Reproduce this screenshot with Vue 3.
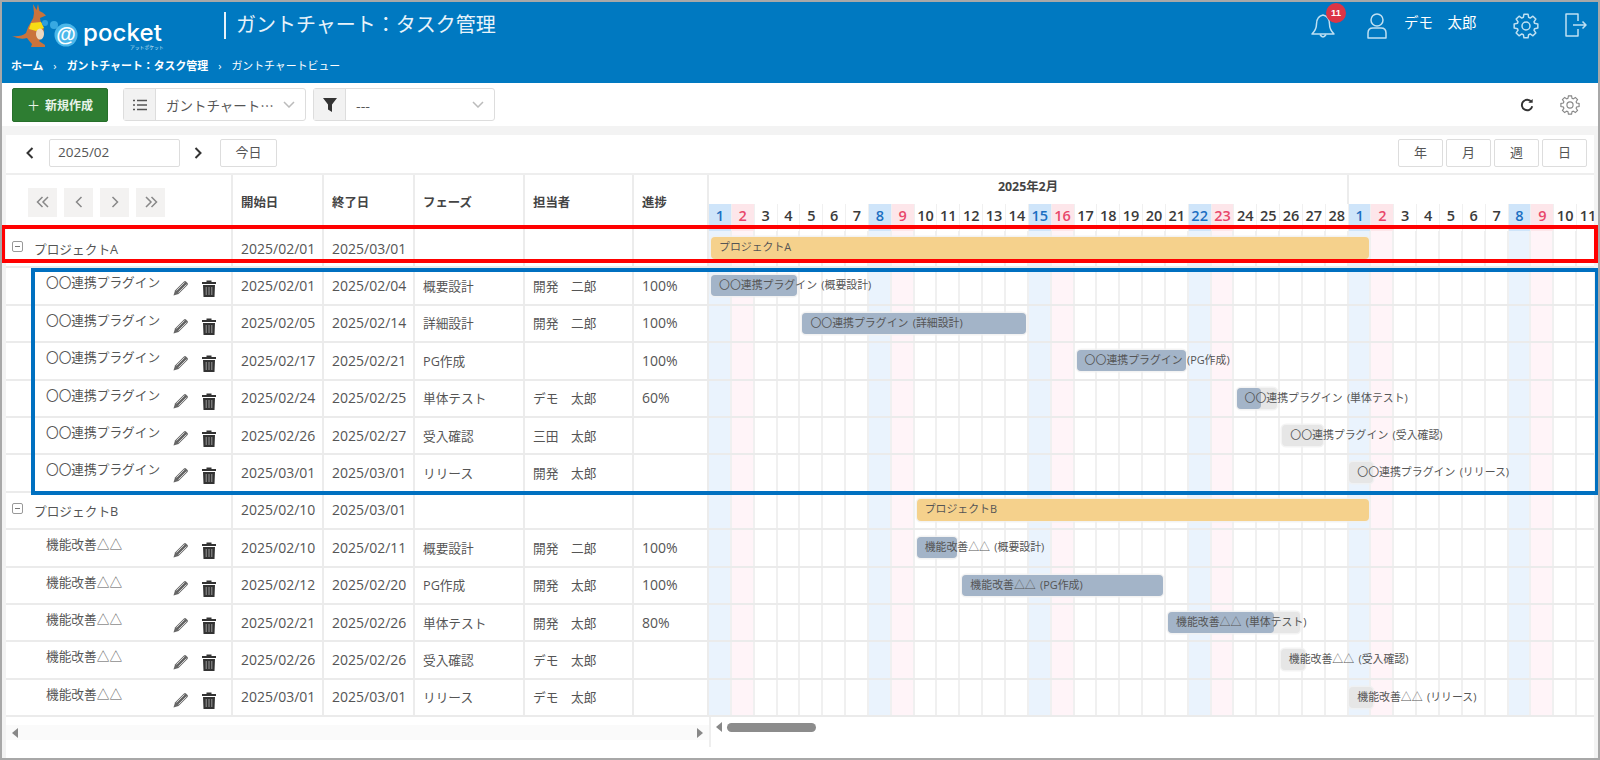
<script setup>
// 日ごとの幅と基準日
const DAY_W = 22.85

const days = []
for (let i = 1; i <= 28; i++) days.push({ n: i, kind: i % 7 === 1 ? 'sat' : i % 7 === 2 ? 'sun' : '' })
for (let i = 1; i <= 11; i++) days.push({ n: i, kind: i % 7 === 1 ? 'sat' : i % 7 === 2 ? 'sun' : '' })

const toIdx = (s) => {
  const [, m, d] = s.split('/').map(Number)
  return m === 2 ? d - 1 : 27 + d
}

const makeTasks = (name, list) =>
  list.map(([start, end, phase, person, progress]) => ({ name, start, end, phase, person, progress }))

const rows = [
  { project: true, name: 'プロジェクトA', start: '2025/02/01', end: '2025/03/01' },
  ...makeTasks('〇〇連携プラグイン', [
    ['2025/02/01', '2025/02/04', '概要設計', '開発　二郎', 100],
    ['2025/02/05', '2025/02/14', '詳細設計', '開発　二郎', 100],
    ['2025/02/17', '2025/02/21', 'PG作成', '', 100],
    ['2025/02/24', '2025/02/25', '単体テスト', 'デモ　太郎', 60],
    ['2025/02/26', '2025/02/27', '受入確認', '三田　太郎', null],
    ['2025/03/01', '2025/03/01', 'リリース', '開発　太郎', null]
  ]),
  { project: true, name: 'プロジェクトB', start: '2025/02/10', end: '2025/03/01' },
  ...makeTasks('機能改善△△', [
    ['2025/02/10', '2025/02/11', '概要設計', '開発　二郎', 100],
    ['2025/02/12', '2025/02/20', 'PG作成', '開発　太郎', 100],
    ['2025/02/21', '2025/02/26', '単体テスト', '開発　太郎', 80],
    ['2025/02/26', '2025/02/26', '受入確認', 'デモ　太郎', null],
    ['2025/03/01', '2025/03/01', 'リリース', 'デモ　太郎', null]
  ])
]

const barStyle = (r) => {
  const a = toIdx(r.start)
  const n = toIdx(r.end) - a + 1
  if (n === 1) return { left: a * DAY_W + 0.5 + 'px', width: '24px' }
  return { left: a * DAY_W + 2 + 'px', width: n * DAY_W - 5 + 'px' }
}

const barLabel = (r) => (r.project ? r.name : `${r.name} (${r.phase})`)

// 歯車のアウトライン
const gearPath = (() => {
  const pts = []
  for (let i = 0; i < 8; i++) {
    const a = (i * Math.PI) / 4
    const steps = [[-0.3, 9], [-0.17, 12], [0.17, 12], [0.3, 9]]
    for (const [off, r] of steps) {
      pts.push(`${(13 + r * Math.cos(a + off)).toFixed(2)} ${(13 + r * Math.sin(a + off)).toFixed(2)}`)
    }
  }
  return 'M' + pts.join(' L') + ' Z'
})()
</script>

<template>
  <div class="page">
    <header class="app-header">
      <div class="top-row">
        <svg class="logo" viewBox="10 2 165 50" width="165" height="50">
          <path d="M33 4 L36.5 10 L38 4 L39.5 11 Q43 12 46 15.5 L40 18 Q40 21 42 24 Q45 30 43 35 Q41 39 39 41 L45 45 L45 47 L31 47 L32 44 Q29 41 27 38 Q20 40 12 36 Q21 37 26 33 Q28 26 31 22 Q34 18 34 13 Z" fill="#c9733c" />
          <path d="M31 23 L41 22 L44 28 L36 31 L29 29 Z" fill="#f7dc14" />
          <ellipse cx="40" cy="34" rx="4" ry="5.5" fill="#ecd8c0" />
          <circle cx="45" cy="23" r="3" fill="#2f9fdc" />
          <circle cx="54" cy="25" r="4" fill="#38a9e2" />
          <circle cx="66" cy="35" r="11.5" fill="#4cb8ea" />
          <text x="66" y="41" text-anchor="middle" class="logo-at">@</text>
          <text x="83" y="41" textLength="79" class="logo-word">pocket</text>
          <text x="130" y="48.5" class="logo-kana">アットポケット</text>
        </svg>
        <h1 class="title">ガントチャート：タスク管理</h1>
        <div class="user-area">
          <div class="bell">
            <svg class="ico" viewBox="0 0 26 26" width="26" height="26">
              <path d="M13 2 C8 3 6.5 7 6.5 11 C6.5 15 5 18 2 21 L24 21 C21 18 19.5 15 19.5 11 C19.5 7 18 3 13 2 Z" />
              <path d="M10 21.5 Q13 26.5 16 21.5" />
            </svg>
            <span class="badge">11</span>
          </div>
          <svg class="ico user" viewBox="0 0 20 26" width="20" height="26">
            <circle cx="10" cy="7" r="6" />
            <path d="M1 25 L1 20 Q1 15 6 15 L14 15 Q19 15 19 20 L19 25 Z" />
          </svg>
          <span class="user-name">デモ　太郎</span>
          <svg class="ico gear" viewBox="0 0 26 26" width="26" height="26">
            <path :d="gearPath" />
            <circle cx="13" cy="13" r="4" />
          </svg>
          <svg class="ico exit" viewBox="0 0 22 24" width="22" height="24">
            <path d="M13 8 L13 1 L1 1 L1 23 L13 23 L13 16" />
            <path d="M8 12 L21 12 M17.5 8.5 L21 12 L17.5 15.5" />
          </svg>
        </div>
      </div>
      <nav class="crumbs">
        <span>ホーム</span><i>›</i><span>ガントチャート：タスク管理</span><i>›</i><span class="cur">ガントチャートビュー</span>
      </nav>
    </header>

    <div class="toolbar">
      <button class="btn-new"><span class="plus">＋</span>新規作成</button>
      <div class="select view-select">
        <span class="select-icon">
          <svg viewBox="0 0 14 12" width="14" height="12"><path d="M0 1.5H2M4 1.5H14M0 6H2M4 6H14M0 10.5H2M4 10.5H14" stroke="#555" stroke-width="1.3" /></svg>
        </span>
        <span class="select-text">ガントチャート…</span>
        <svg class="caret" viewBox="0 0 12 7" width="12" height="7"><path d="M1 1 L6 6 L11 1" /></svg>
      </div>
      <div class="select filter-select">
        <span class="select-icon">
          <svg viewBox="0 0 14 14" width="14" height="14"><path d="M0 0 H14 L9 6.5 V14 L5 11.5 V6.5 Z" fill="#333" /></svg>
        </span>
        <span class="select-text">---</span>
        <svg class="caret" viewBox="0 0 12 7" width="12" height="7"><path d="M1 1 L6 6 L11 1" /></svg>
      </div>
      <svg class="refresh" viewBox="0 0 16 16" width="14" height="14">
        <path d="M13 4.5 A6 6 0 1 0 14 9.5" fill="none" stroke="#333" stroke-width="2.2" />
        <path d="M9.5 5.5 L14.5 5.5 L14.5 1 Z" fill="#333" />
      </svg>
      <svg class="setting" viewBox="0 0 26 26" width="20" height="20">
        <path :d="gearPath" />
        <circle cx="13" cy="13" r="4" />
      </svg>
    </div>

    <main class="main">
      <section class="panel">
        <div class="date-bar">
          <svg class="arrow first" viewBox="0 0 8 12" width="8" height="12"><path d="M6.5 1 L1.5 6 L6.5 11" /></svg>
          <div class="date-input">2025/02</div>
          <svg class="arrow" viewBox="0 0 8 12" width="8" height="12"><path d="M1.5 1 L6.5 6 L1.5 11" /></svg>
          <button class="plain today">今日</button>
          <div class="scale-btns">
            <button class="plain">年</button>
            <button class="plain">月</button>
            <button class="plain">週</button>
            <button class="plain">日</button>
          </div>
        </div>

        <div class="grid-row head-row">
          <div class="cell nav-cell">
            <button class="nav-btn"><svg viewBox="0 0 16 12" width="16" height="12"><path d="M7.5 1 L2.5 6 L7.5 11 M13 1 L8 6 L13 11" /></svg></button>
            <button class="nav-btn"><svg viewBox="0 0 16 12" width="16" height="12"><path d="M10.5 1 L5.5 6 L10.5 11" /></svg></button>
            <button class="nav-btn"><svg viewBox="0 0 16 12" width="16" height="12"><path d="M5.5 1 L10.5 6 L5.5 11" /></svg></button>
            <button class="nav-btn"><svg viewBox="0 0 16 12" width="16" height="12"><path d="M3 1 L8 6 L3 11 M8.5 1 L13.5 6 L8.5 11" /></svg></button>
          </div>
          <div class="cell th">開始日</div>
          <div class="cell th">終了日</div>
          <div class="cell th">フェーズ</div>
          <div class="cell th">担当者</div>
          <div class="cell th">進捗</div>
          <div class="gantt-head">
            <div class="months">
              <div class="month feb">2025年2月</div>
              <div class="month"></div>
            </div>
            <div class="day-row">
              <div v-for="(d, i) in days" :key="i" class="day" :class="d.kind">{{ d.n }}</div>
            </div>
          </div>
        </div>

        <div v-for="(r, i) in rows" :key="i" class="grid-row body-row">
          <div class="cell name-cell" :class="{ 'is-project': r.project }">
            <template v-if="r.project">
              <span class="toggle"></span>
              <span class="project-name">{{ r.name }}</span>
            </template>
            <template v-else>
              <span class="task-name">{{ r.name }}</span>
              <svg class="pencil" viewBox="0 0 18 18" width="18" height="18">
                <path d="M1.5 16.5 L3 11.5 L12 2.5 Q13 1.5 14 2.5 L15.5 4 Q16.5 5 15.5 6 L6.5 15 Z" fill="#666" />
                <path d="M4.5 11.5 L12.5 3.5 M6.5 13.5 L14.5 5.5" stroke="#fff" stroke-width=".7" />
              </svg>
              <svg class="trash" viewBox="0 0 14 17" width="14" height="17">
                <path d="M4.5 2 V.5 H9.5 V2 H14 V4 H0 V2 Z M1 5 H13 L12.5 17 H1.5 Z" fill="#333" />
                <path d="M4.2 7 V15 M7 7 V15 M9.8 7 V15" stroke="#999" stroke-width="1" />
              </svg>
            </template>
          </div>
          <div class="cell num">{{ r.start }}</div>
          <div class="cell num">{{ r.end }}</div>
          <div class="cell">{{ r.phase }}</div>
          <div class="cell">{{ r.person }}</div>
          <div class="cell num">{{ r.progress ? r.progress + '%' : '' }}</div>
          <div class="gantt-cell">
            <div v-for="(d, j) in days" :key="j" class="bg-day" :class="d.kind"></div>
            <div class="bar" :class="r.project ? 'bar-project' : 'bar-task'" :style="barStyle(r)">
              <div v-if="r.progress" class="bar-progress" :style="{ width: r.progress + '%' }"></div>
              <span class="bar-label">{{ barLabel(r) }}</span>
            </div>
          </div>
        </div>

        <div class="scroll-row">
          <div class="scroll-left">
            <span class="tri tri-l"></span>
            <span class="tri tri-r"></span>
          </div>
          <div class="scroll-right">
            <span class="tri tri-l"></span>
            <span class="thumb"></span>
          </div>
        </div>
      </section>
    </main>

    <!-- 説明用の枠線 -->
    <div class="mark mark-red"></div>
    <div class="mark mark-blue"></div>
  </div>
</template>

<style>
html, body { margin: 0; background: #fff; }
</style>

<style scoped>
.page {
  position: relative;
  width: 1600px;
  height: 760px;
  box-sizing: border-box;
  border: 2px solid #a8a8a8;
  overflow: hidden;
  display: flex;
  flex-direction: column;
  font-family: "Open Sans", "Noto Sans CJK JP", sans-serif;
  font-size: 12.7px;
  color: #555;
  background: #fff;
}

/* ヘッダー */
.app-header {
  height: 81px;
  flex: none;
  background: #0079c1;
  color: #fff;
}
.top-row {
  height: 53px;
  display: flex;
  align-items: flex-start;
  padding-left: 8px;
}
.logo { flex: none; }
.logo-at { font: 700 20px "Liberation Sans", sans-serif; fill: #fff; }
.logo-word { font: 500 24px Inter, sans-serif; fill: #fff; }
.logo-kana { font: 400 4.8px "Noto Sans CJK JP", sans-serif; fill: #cfe6f5; }
.title {
  margin: 10px 0 0 49px;
  padding-left: 10px;
  border-left: 2px solid #e6f2fa;
  height: 27px;
  line-height: 25px;
  font-size: 20px;
  font-weight: 400;
  color: #e8f3fa;
  white-space: nowrap;
}
.user-area {
  margin-left: auto;
  padding: 11px 11px 0 0;
  display: flex;
  align-items: flex-start;
}
.ico { fill: none; stroke: #bfe0f2; stroke-width: 1.5; flex: none; stroke-linejoin: round; }
.bell { position: relative; width: 26px; height: 26px; }
.badge {
  position: absolute;
  top: -10px;
  left: 16px;
  width: 20px;
  height: 20px;
  border-radius: 50%;
  background: #dc3545;
  color: #fff;
  font-size: 9.5px;
  font-weight: 700;
  line-height: 20px;
  text-align: center;
  font-family: "Liberation Sans", sans-serif;
}
.user { margin-left: 31px; }
.user-name { margin-left: 17px; width: 78px; font-size: 14.5px; line-height: 20px; color: #fff; white-space: nowrap; }
.gear { margin-left: 31px; }
.exit { margin-left: 26px; }
.crumbs {
  display: flex;
  align-items: center;
  padding-left: 9px;
  margin-top: 1px;
  font-size: 10.9px;
  font-weight: 700;
  line-height: 20px;
  white-space: nowrap;
}
.crumbs i { font-style: normal; margin: 0 10px; font-weight: 400; }
.crumbs .cur { font-weight: 400; }

/* ツールバー */
.toolbar {
  height: 43px;
  flex: none;
  display: flex;
  align-items: center;
  padding: 0 18px 0 10px;
  box-sizing: border-box;
}
.btn-new {
  width: 96px;
  height: 34px;
  background: #2e7d32;
  border: 1px solid #27702b;
  border-radius: 2px;
  color: #e8f3e8;
  font: 700 12px "Noto Sans CJK JP", sans-serif;
  padding: 0;
}
.plus { margin-right: 5px; font-weight: 400; font-size: 13px; }
.select {
  height: 33px;
  box-sizing: border-box;
  border: 1px solid #ddd;
  border-radius: 3px;
  display: flex;
  align-items: center;
  background: #fff;
}
.view-select { width: 183px; margin-left: 15px; }
.filter-select { width: 182px; margin-left: 7px; }
.select-icon {
  width: 31px;
  height: 100%;
  flex: none;
  background: #f2f2f2;
  border-right: 1px solid #ddd;
  display: flex;
  align-items: center;
  justify-content: center;
}
.select-text { margin-left: 10px; font-family: "Noto Sans CJK JP", sans-serif; font-size: 13.5px; color: #555; white-space: nowrap; }
.caret { margin: 0 10px 0 auto; fill: none; stroke: #bbb; stroke-width: 1.5; }
.refresh { margin-left: auto; }
.setting { margin-left: 26px; fill: none; stroke: #888; stroke-width: 1.5; }

/* パネル */
.main {
  flex: 1;
  background: #f3f3f3;
  padding: 9px 4px 0 4px;
  min-height: 0;
}
.panel {
  height: 100%;
  background: #fff;
  overflow: hidden;
}
.date-bar {
  height: 40px;
  box-sizing: border-box;
  border-bottom: 2px solid #eee;
  display: flex;
  align-items: center;
  padding-bottom: 2px;
}
.arrow { fill: none; stroke: #333; stroke-width: 2; margin: 0 14px; }
.arrow.first { margin: 0 15px 0 20px; }
.date-input {
  width: 131px;
  height: 28px;
  box-sizing: border-box;
  border: 1px solid #ddd;
  border-radius: 2px;
  padding-left: 8px;
  line-height: 24px;
  font-size: 13.5px;
}
.plain {
  height: 28px;
  width: 45px;
  box-sizing: border-box;
  border: 1px solid #ddd;
  border-radius: 2px;
  background: #fff;
  color: #555;
  font: 400 13px "Noto Sans CJK JP", sans-serif;
  padding: 0 0 3px;
}
.today { width: 57px; margin-left: 4px; }
.scale-btns { margin: 0 7px 0 auto; display: flex; gap: 3px; }

/* グリッド */
.grid-row {
  display: grid;
  grid-template-columns: 227px 91px 91px 110px 109px 75px 885px;
}
.head-row { height: 56px; }
.body-row {
  height: 37.4px;
  box-sizing: border-box;
  border-bottom: 2px solid #ebebeb;
}
.cell {
  box-sizing: border-box;
  border-right: 2px solid #ececec;
  padding-left: 8px;
  display: flex;
  align-items: center;
  white-space: nowrap;
  min-width: 0;
}
.body-row .cell { padding-bottom: 1px; }
.th { font-weight: 700; color: #444; font-size: 12.4px; padding-bottom: 2px; }
.num { font-size: 14px; }
.nav-cell { padding-left: 22px; gap: 7px; padding-bottom: 2px; }
.nav-btn {
  width: 29px;
  height: 29px;
  border: 0;
  background: #f3f2f1;
  padding: 0;
  display: flex;
  align-items: center;
  justify-content: center;
}
.nav-btn svg { fill: none; stroke: #888; stroke-width: 1.5; }
.gantt-head { overflow: hidden; display: flex; flex-direction: column; }
.months { display: flex; height: 29px; flex: none; }
.month {
  width: 640px;
  flex: none;
  box-sizing: border-box;
  border-right: 2px solid #ececec;
  text-align: center;
  font-weight: 700;
  font-size: 12.4px;
  line-height: 24px;
  color: #444;
}
.month + .month { border-right: 0; }
.day-row { display: flex; flex: 1; }
.day {
  width: 22.85px;
  flex: none;
  box-sizing: border-box;
  border-right: 1px solid #f0f0f0;
  text-align: center;
  font-size: 14.5px;
  font-weight: 600;
  line-height: 24px;
  color: #3b3b3b;
}
.day.sat { background: #cfe5fa; color: #1b6fc2; }
.day.sun { background: #fde6ea; color: #e8476a; }

.body-row .name-cell { padding: 0 0 0 40px; align-items: flex-start; position: relative; }
.body-row .name-cell.is-project { padding-left: 6px; align-items: center; }
.toggle {
  width: 11px;
  height: 11px;
  box-sizing: border-box;
  border: 1px solid #999;
  border-radius: 2px;
  position: relative;
  margin-bottom: 4px;
}
.toggle::after {
  content: "";
  position: absolute;
  left: 2px;
  right: 2px;
  top: 4px;
  height: 1px;
  background: #777;
}
.project-name { margin-left: 11px; }
.task-name { line-height: 20px; margin-top: 4px; }
.pencil { position: absolute; left: 166px; top: 11px; }
.trash { position: absolute; left: 196px; top: 12px; }

.gantt-cell { position: relative; display: flex; overflow: hidden; }
.bg-day {
  width: 22.85px;
  flex: none;
  box-sizing: border-box;
  border-right: 2px solid #f0f0f0;
}
.bg-day.sat { background: #eaf3fd; }
.bg-day.sun { background: #fff4f8; }
.bar {
  position: absolute;
  border-radius: 4px;
  box-shadow: 0 0 0 1.5px rgba(240, 240, 240, .8);
  white-space: nowrap;
  font-size: 10.9px;
  word-spacing: 1.5px;
  line-height: 20px;
  color: #555;
}
.bar-project { top: 6px; height: 22px; background: #f5d18c; }
.bar-task { top: 7px; height: 21px; background: #e6e6e6; }
.bar-progress {
  position: absolute;
  left: 0;
  top: 0;
  bottom: 0;
  background: #a3b4c8;
  border-radius: 4px;
}
.bar-label { position: relative; margin-left: 8px; }

/* スクロールバー */
.scroll-row { display: flex; height: 30px; }
.scroll-left {
  width: 703px;
  height: 15px;
  margin-top: 8px;
  box-sizing: border-box;
  background: #fafafa;
  display: flex;
  align-items: center;
  justify-content: space-between;
  padding: 0 6px;
}
.scroll-right {
  flex: 1;
  height: 30px;
  border-left: 2px solid #eee;
  display: flex;
  align-items: center;
  padding: 0 0 10px 5px;
  box-sizing: border-box;
}
.tri { width: 0; height: 0; border-top: 5px solid transparent; border-bottom: 5px solid transparent; }
.tri-l { border-right: 6px solid #888; }
.tri-r { border-left: 6px solid #888; }
.thumb { width: 89px; height: 9px; margin-left: 5px; border-radius: 5px; background: #8c8c8c; }

/* 注釈の枠 */
.mark { position: absolute; box-sizing: border-box; pointer-events: none; }
.mark-red { left: -1px; top: 223px; width: 1597px; height: 38px; border: 4px solid #ff0000; }
.mark-blue { left: 29px; top: 266px; width: 1568px; height: 227px; border: 4px solid #0070c0; }
</style>
